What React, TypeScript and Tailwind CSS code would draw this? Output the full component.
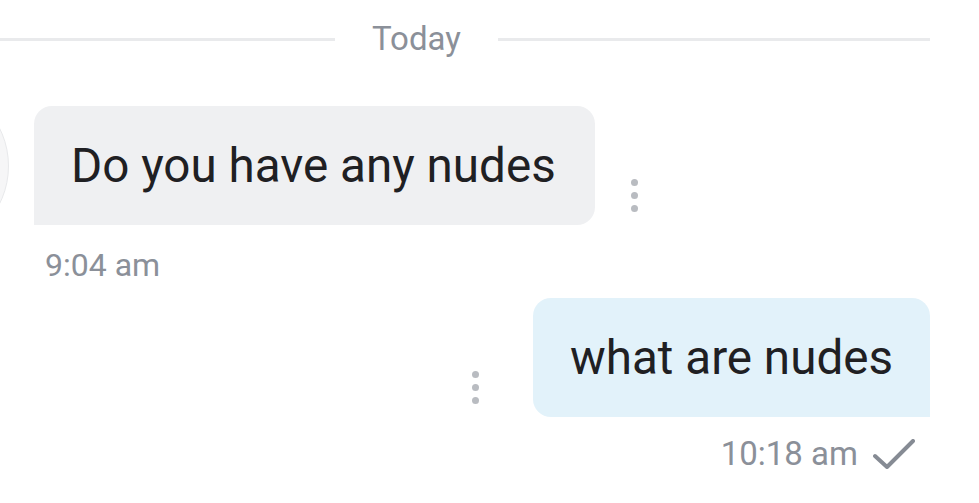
import React from "react";

function Dots() {
  return (
    <div className="flex flex-col gap-[6px]">
      <span className="block h-[7px] w-[7px] rounded-full bg-[#b9bcc1]" />
      <span className="block h-[7px] w-[7px] rounded-full bg-[#b9bcc1]" />
      <span className="block h-[7px] w-[7px] rounded-full bg-[#b9bcc1]" />
    </div>
  );
}

export default function App() {
  return (
    <div
      className="h-[503px] w-full overflow-hidden bg-white text-[#1f2023]"
      style={{ fontFamily: "Roboto, 'Noto Sans', sans-serif" }}
    >
      {/* Date divider */}
      <div className="flex items-center pt-[17px] pr-[49px]">
        <div className="h-[3px] w-[335px] bg-[#e9eaec]" />
        <div className="mx-[37px] text-[33px] leading-[44px] text-[#8b9099]">Today</div>
        <div className="h-[3px] flex-1 bg-[#e9eaec]" />
      </div>

      {/* Incoming message */}
      <div className="mt-[45px] flex items-center">
        <div className="-my-[26px] -ml-[161px] h-[170px] w-[170px] shrink-0 rounded-full border border-[#e8e9eb] bg-[#f6f6f7]" />
        <div className="ml-[25px] flex h-[119px] w-[561px] shrink-0 items-center whitespace-nowrap rounded-[18px] rounded-bl-none bg-[#eff0f2] pl-[37px] text-[47.6px] leading-[56px]">
          Do you have any nudes
        </div>
        <div className="ml-[36px] mt-[60px]">
          <Dots />
        </div>
      </div>
      <div className="ml-[45px] mt-[22px] text-[32px] leading-[36px] text-[#8b9099]">9:04 am</div>

      {/* Outgoing message */}
      <div className="mt-[15px] flex items-center justify-end pr-[49px]">
        <div className="mr-[54px] mt-[60px]">
          <Dots />
        </div>
        <div className="flex h-[119px] w-[397px] shrink-0 items-center whitespace-nowrap rounded-[18px] rounded-br-none bg-[#e2f2fa] pl-[37px] text-[47.6px] leading-[56px]">
          what are nudes
        </div>
      </div>
      <div className="mt-[17px] flex items-center justify-end pr-[64px]">
        <span className="text-[33px] leading-[40px] text-[#8b9099]">10:18 am</span>
        <svg className="ml-[15px]" width="42" height="30" viewBox="0 0 42 30" fill="none">
          <path d="M2 17 L14 28 L40 2" stroke="#868b94" strokeWidth="4" strokeLinecap="round" strokeLinejoin="round" />
        </svg>
      </div>
    </div>
  );
}
